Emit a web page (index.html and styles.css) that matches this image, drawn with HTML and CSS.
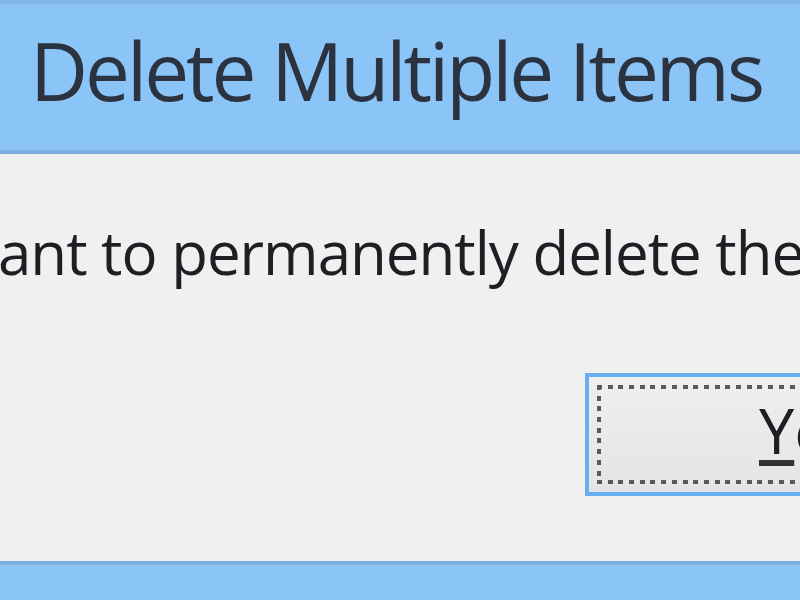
FILE: index.html
```html
<!DOCTYPE html>
<html lang="en">
<head>
<meta charset="utf-8">
<title>Delete Multiple Items</title>
<link rel="stylesheet" href="styles.css">
</head>
<body>
<div class="window">
  <div class="titlebar">
    <span class="title">Delete Multiple Items</span>
  </div>
  <div class="content">
    <p class="message">ant to permanently delete these</p>
    <div class="buttons">
      <button class="btn" type="button"><span class="focus"><span class="label"><u>Y</u>es</span></span></button>
    </div>
  </div>
  <div class="footer"></div>
</div>
</body>
</html>
```
FILE: styles.css
```css
html, body {
  margin: 0;
  padding: 0;
  width: 800px;
  height: 600px;
  overflow: hidden;
  background: #f0f0f0;
}

.window {
  display: flex;
  flex-direction: column;
  width: 800px;
  height: 600px;
  overflow: hidden;
  font-family: "Open Sans", "Noto Sans", "Liberation Sans", sans-serif;
}

.titlebar {
  height: 146px;
  flex: none;
  background: #8bc5f8;
  border-top: 4px solid #80b7ea;
  border-bottom: 4px solid #7caedf;
  padding-left: 30px;
  box-sizing: content-box;
  overflow: hidden;
}

.title {
  display: block;
  font-size: 80px;
  line-height: 100px;
  padding-top: 16px;
  color: #2c3340;
  letter-spacing: -3px;
  white-space: nowrap;
}

.content {
  flex: 1;
  background: #f0f0f0;
  padding-top: 58px;
  overflow: hidden;
}

.message {
  margin: 0 0 0 -2px;
  font-size: 60px;
  line-height: 80px;
  color: #1e1e24;
  letter-spacing: -1px;
  white-space: nowrap;
}

.buttons {
  display: flex;
  padding-left: 585px;
  margin-top: 81px;
}

.btn {
  flex: none;
  width: 300px;
  height: 123px;
  margin: 0;
  padding: 8px;
  border: 4px solid #6aaef2;
  background: linear-gradient(#efefef, #e4e4e4);
  box-sizing: border-box;
  font: inherit;
  cursor: default;
}

.focus {
  display: flex;
  align-items: center;
  height: 100%;
  padding: 0 0 10px 162px;
  box-sizing: border-box;
  background:
    repeating-linear-gradient(90deg, #5a5a5a 0 5px, transparent 5px 10.7px) top left / 100% 4px no-repeat,
    repeating-linear-gradient(90deg, #5a5a5a 0 5px, transparent 5px 10.7px) bottom left / 100% 4px no-repeat,
    repeating-linear-gradient(180deg, #5a5a5a 0 5px, transparent 5px 10.7px) top left / 4px 100% no-repeat,
    repeating-linear-gradient(180deg, #5a5a5a 0 5px, transparent 5px 10.7px) top right / 4px 100% no-repeat;
}

.label {
  font-size: 63px;
  line-height: 63px;
  color: #1e1e24;
  white-space: nowrap;
}

.label u {
  text-decoration-thickness: 6px;
  text-underline-offset: 6px;
  text-decoration-color: #333;
}

.footer {
  height: 35px;
  flex: none;
  background: #8bc5f8;
  border-top: 4px solid #7caedf;
}
```
